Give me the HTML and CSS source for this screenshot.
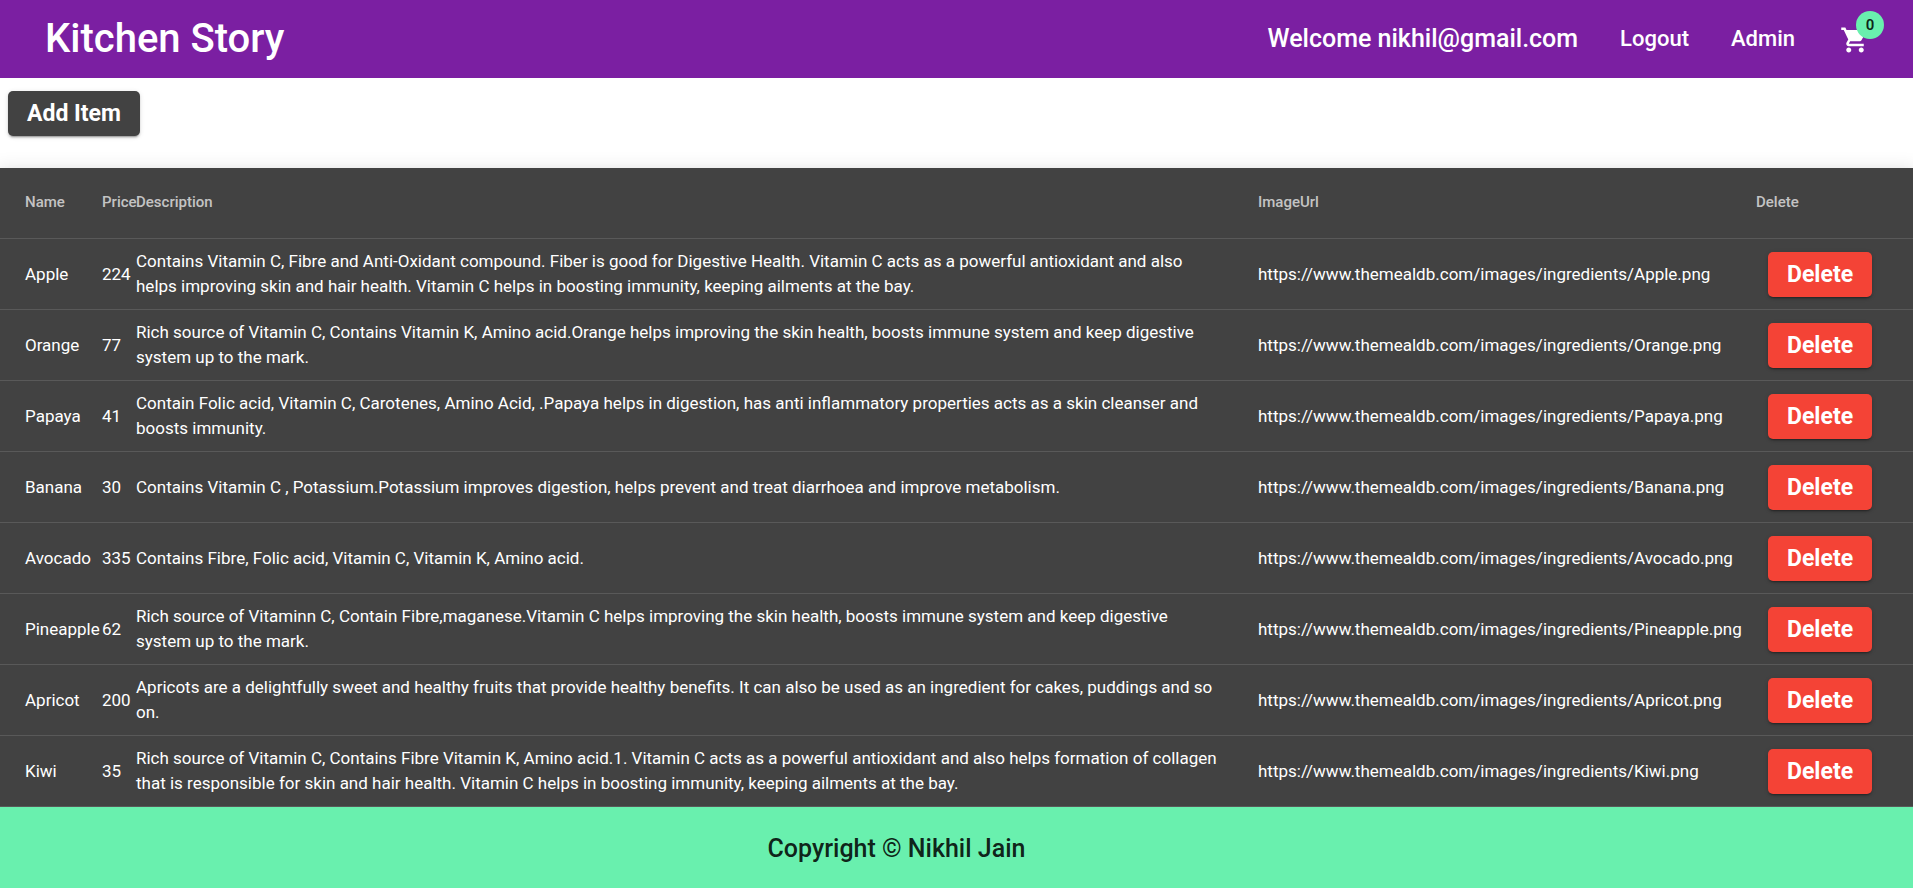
FILE: index.html
```html
<!DOCTYPE html>
<html lang="en">
<head>
<meta charset="utf-8">
<meta name="viewport" content="width=device-width, initial-scale=1">
<title>Kitchen Story</title>
<link rel="stylesheet" href="styles.css">
</head>
<body>
<header class="toolbar">
  <h1 class="brand">Kitchen Story</h1>
  <nav class="nav">
    <span class="welcome">Welcome nikhil@gmail.com</span>
    <a class="nav-link" href="#logout">Logout</a>
    <a class="nav-link" href="#admin">Admin</a>
    <button class="cart" type="button" aria-label="Cart">
      <svg class="cart-icon" viewBox="0 0 24 24" aria-hidden="true"><path fill="currentColor" d="M7 18c-1.1 0-1.99.9-1.99 2S5.9 22 7 22s2-.9 2-2-.9-2-2-2zM1 2v2h2l3.6 7.59-1.35 2.45c-.16.28-.25.61-.25.96 0 1.1.9 2 2 2h12v-2H7.42c-.14 0-.25-.11-.25-.25l.03-.12.9-1.63h7.45c.75 0 1.41-.41 1.75-1.03l3.58-6.49c.08-.14.12-.31.12-.48 0-.55-.45-1-1-1H5.21l-.94-2H1zm16 16c-1.1 0-1.99.9-1.99 2s.89 2 1.99 2 2-.9 2-2-.9-2-2-2z"/></svg>
      <span class="badge">0</span>
    </button>
  </nav>
</header>
<main>
  <div class="actions">
    <button class="button button-add" type="button">Add Item</button>
  </div>
  <table class="items">
    <colgroup>
      <col class="col-name"><col class="col-price"><col class="col-description"><col class="col-image"><col class="col-delete">
    </colgroup>
    <thead>
      <tr><th>Name</th><th>Price</th><th>Description</th><th>ImageUrl</th><th>Delete</th></tr>
    </thead>
    <tbody>
      <tr>
        <td>Apple</td><td>224</td>
        <td class="description">Contains Vitamin C, Fibre and Anti-Oxidant compound. Fiber is good for Digestive Health. Vitamin C acts as a powerful antioxidant and also helps improving skin and hair health. Vitamin C helps in boosting immunity, keeping ailments at the bay.</td>
        <td>https://www.themealdb.com/images/ingredients/Apple.png</td>
        <td><button class="button button-delete" type="button">Delete</button></td>
      </tr>
      <tr>
        <td>Orange</td><td>77</td>
        <td class="description">Rich source of Vitamin C, Contains Vitamin K, Amino acid.Orange helps improving the skin health, boosts immune system and keep digestive system up to the mark.</td>
        <td>https://www.themealdb.com/images/ingredients/Orange.png</td>
        <td><button class="button button-delete" type="button">Delete</button></td>
      </tr>
      <tr>
        <td>Papaya</td><td>41</td>
        <td class="description">Contain Folic acid, Vitamin C, Carotenes, Amino Acid, .Papaya helps in digestion, has anti inflammatory properties acts as a skin cleanser and boosts immunity.</td>
        <td>https://www.themealdb.com/images/ingredients/Papaya.png</td>
        <td><button class="button button-delete" type="button">Delete</button></td>
      </tr>
      <tr>
        <td>Banana</td><td>30</td>
        <td class="description">Contains Vitamin C , Potassium.Potassium improves digestion, helps prevent and treat diarrhoea and improve metabolism.</td>
        <td>https://www.themealdb.com/images/ingredients/Banana.png</td>
        <td><button class="button button-delete" type="button">Delete</button></td>
      </tr>
      <tr>
        <td>Avocado</td><td>335</td>
        <td class="description">Contains Fibre, Folic acid, Vitamin C, Vitamin K, Amino acid.</td>
        <td>https://www.themealdb.com/images/ingredients/Avocado.png</td>
        <td><button class="button button-delete" type="button">Delete</button></td>
      </tr>
      <tr>
        <td>Pineapple</td><td>62</td>
        <td class="description">Rich source of Vitaminn C, Contain Fibre,maganese.Vitamin C helps improving the skin health, boosts immune system and keep digestive system up to the mark.</td>
        <td>https://www.themealdb.com/images/ingredients/Pineapple.png</td>
        <td><button class="button button-delete" type="button">Delete</button></td>
      </tr>
      <tr>
        <td>Apricot</td><td>200</td>
        <td class="description">Apricots are a delightfully sweet and healthy fruits that provide healthy benefits. It can also be used as an ingredient for cakes, puddings and so on.</td>
        <td>https://www.themealdb.com/images/ingredients/Apricot.png</td>
        <td><button class="button button-delete" type="button">Delete</button></td>
      </tr>
      <tr>
        <td>Kiwi</td><td>35</td>
        <td class="description">Rich source of Vitamin C, Contains Fibre Vitamin K, Amino acid.1. Vitamin C acts as a powerful antioxidant and also helps formation of collagen that is responsible for skin and hair health. Vitamin C helps in boosting immunity, keeping ailments at the bay.</td>
        <td>https://www.themealdb.com/images/ingredients/Kiwi.png</td>
        <td><button class="button button-delete" type="button">Delete</button></td>
      </tr>
    </tbody>
  </table>
</main>
<footer class="footer">Copyright © Nikhil Jain</footer>
</body>
</html>
```
FILE: styles.css
```css
* {
  box-sizing: border-box;
}

body {
  margin: 0;
  background: #fff;
  color: #fff;
  font-family: Roboto, "Liberation Sans", sans-serif;
}

.toolbar {
  display: flex;
  align-items: center;
  justify-content: space-between;
  padding: 0 40px 0 45px;
  min-height: 78px;
  background: #7b1fa2;
}

.brand {
  margin: 0;
  font-size: 40px;
  font-weight: 500;
  line-height: 48px;
}

.nav {
  display: flex;
  align-items: center;
  gap: 42px;
  padding-bottom: 2px;
  font-weight: 500;
}

.welcome {
  font-size: 25px;
}

.nav-link {
  color: inherit;
  font-size: 22px;
  text-decoration: none;
}

.cart {
  position: relative;
  margin: 4px 3px 0;
  padding: 0;
  border: 0;
  background: none;
  color: inherit;
  font: inherit;
}

.cart-icon {
  display: block;
  width: 30px;
  height: 30px;
}

.badge {
  position: absolute;
  top: -14px;
  left: 16px;
  width: 28px;
  height: 28px;
  border-radius: 50%;
  background: #69f0ae;
  color: rgba(0, 0, 0, 0.87);
  font-size: 15px;
  font-weight: 600;
  line-height: 28px;
  text-align: center;
}

.actions {
  padding: 13px 8px 32px;
}

.button {
  display: block;
  height: 45px;
  padding: 0 19px;
  border: 0;
  border-radius: 5px;
  box-shadow: 0 3px 1px -2px rgba(0, 0, 0, 0.2), 0 2px 2px 0 rgba(0, 0, 0, 0.14), 0 1px 5px 0 rgba(0, 0, 0, 0.12);
  color: #fff;
  font-family: inherit;
  font-size: 23px;
  font-weight: 700;
  line-height: 45px;
}

.button-add {
  background: #424242;
}

.button-delete {
  margin-left: 12px;
  background: #f44336;
}

.items {
  width: 100%;
  table-layout: fixed;
  border-collapse: separate;
  border-spacing: 0;
  background: #424242;
  box-shadow: 0 6px 6px -4px rgba(0, 0, 0, 0.2), 0 10px 12px 1px rgba(0, 0, 0, 0.14), 0 4px 18px 3px rgba(0, 0, 0, 0.12);
}

.col-name {
  width: 102px;
}

.col-price {
  width: 34px;
}

.col-image {
  width: 498px;
}

.col-delete {
  width: 157px;
}

.items th,
.items td {
  height: 71px;
  padding: 0;
  border-bottom: 1px solid rgba(255, 255, 255, 0.12);
  text-align: left;
  vertical-align: middle;
}

.items th {
  padding-bottom: 2px;
  color: rgba(255, 255, 255, 0.7);
  font-size: 15px;
  font-weight: 500;
}

.items td {
  font-size: 17px;
  line-height: 25px;
}

.items th:first-child,
.items td:first-child {
  padding-left: 25px;
}

.items .description {
  padding-right: 36px;
}

.footer {
  position: relative;
  padding: 25px 120px 23px 0;
  background: #69f0ae;
  color: rgba(0, 0, 0, 0.87);
  font-size: 25px;
  font-weight: 500;
  line-height: 33px;
  text-align: center;
}
```
